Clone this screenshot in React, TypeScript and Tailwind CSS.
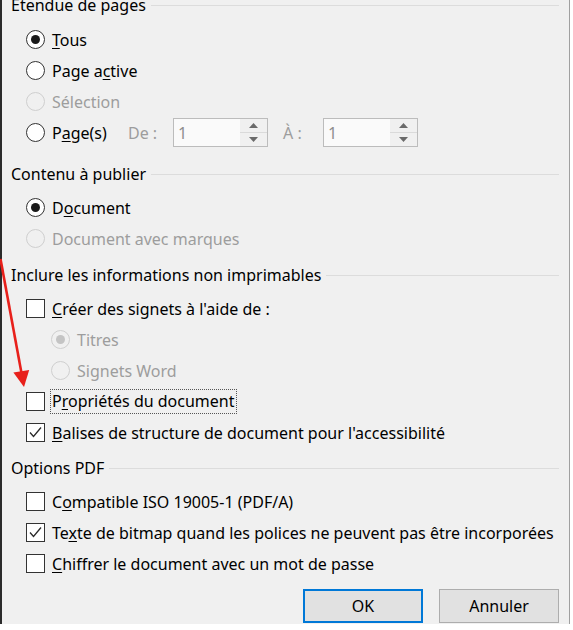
import type { ReactNode } from "react";

function Radio({ checked, disabled }: { checked?: boolean; disabled?: boolean }) {
  return (
    <span
      className={`flex h-[19px] w-[19px] shrink-0 items-center justify-center rounded-full border ${
        disabled ? "border-[#cfcfcf] bg-[#f0f0f0]" : "border-[#333] bg-white"
      }`}
    >
      {checked && (
        <span className={`h-[9px] w-[9px] rounded-full ${disabled ? "bg-[#c4c4c4]" : "bg-[#1a1a1a]"}`} />
      )}
    </span>
  );
}

function Check({ checked }: { checked?: boolean }) {
  return (
    <span className="flex h-[19px] w-[19px] shrink-0 items-center justify-center border border-[#333] bg-white">
      {checked && (
        <svg width="17" height="17" viewBox="0 0 17 17">
          <polyline points="3,8.5 6.5,12.5 14,3.5" fill="none" stroke="#2a2a2a" strokeWidth="1.3" />
        </svg>
      )}
    </span>
  );
}

function Row({ children, indent }: { children: ReactNode; indent?: boolean }) {
  return (
    <div className={`flex h-[31px] items-center gap-[7px] ${indent ? "pl-[49px]" : "pl-[24px]"}`}>{children}</div>
  );
}

function Header({ title, className = "" }: { title: string; className?: string }) {
  return (
    <div className={`flex h-[22px] items-center pl-[9px] pr-[10px] ${className}`}>
      <span className="whitespace-nowrap">{title}</span>
      <div className="ml-[5px] h-px flex-1 bg-[#dcdcdc]" />
    </div>
  );
}

function Spin() {
  return (
    <div className="flex h-[29px] w-[95px] shrink-0 border border-[#bcbcbc]">
      <div className="flex flex-1 items-center bg-[#fafafa] pl-[4px] text-[#8e8e8e]">1</div>
      <div className="flex w-[27px] flex-col bg-[#f0f0f0]">
        <div className="flex flex-1 items-center justify-center border-b border-[#dadada]">
          <svg width="9" height="5" viewBox="0 0 9 5">
            <polygon points="0,5 4.5,0 9,5" fill="#6a6a6a" />
          </svg>
        </div>
        <div className="flex flex-1 items-center justify-center">
          <svg width="9" height="5" viewBox="0 0 9 5">
            <polygon points="0,0 4.5,5 9,0" fill="#6a6a6a" />
          </svg>
        </div>
      </div>
    </div>
  );
}

const dim = "text-[#9d9d9d]";

export default function App() {
  return (
    <div className="h-[630px] w-[573px] overflow-hidden bg-white font-['Noto_Sans',sans-serif] text-[16px] text-black">
      <div className="relative h-[630px] w-[570px] border-l-2 border-r border-l-[#2b2b2b] border-r-[#a0a0a0] bg-[#f0f0f0]">
        <Header title="Étendue de pages" className="-mt-[6px]" />
        <div className="pt-[8px]">
          <Row>
            <Radio checked />
            <span>
              <u className="underline-offset-2">T</u>ous
            </span>
          </Row>
          <Row>
            <Radio />
            <span>
              Page a<u className="underline-offset-2">c</u>tive
            </span>
          </Row>
          <Row>
            <Radio disabled />
            <span className={dim}>Sélection</span>
          </Row>
          <Row>
            <Radio />
            <span className="w-[76px] shrink-0">
              P<u className="underline-offset-2">a</u>ge(s)
            </span>
            <span className={`-ml-[7px] w-[38px] shrink-0 ${dim}`}>De :</span>
            <Spin />
            <span className={`ml-[8px] w-[33px] shrink-0 ${dim}`}>À :</span>
            <Spin />
          </Row>
        </div>

        <Header title="Contenu à publier" className="mt-[15px]" />
        <div className="pt-[7px]">
          <Row>
            <Radio checked />
            <span>
              D<u className="underline-offset-2">o</u>cument
            </span>
          </Row>
          <Row>
            <Radio disabled />
            <span className={dim}>Document avec marques</span>
          </Row>
        </div>

        <Header title="Inclure les informations non imprimables" className="mt-[10px]" />
        <div className="pt-[7px]">
          <Row>
            <Check />
            <span>
              <u className="underline-offset-2">C</u>réer des signets à l'aide de :
            </span>
          </Row>
          <Row indent>
            <Radio checked disabled />
            <span className={dim}>Titres</span>
          </Row>
          <Row indent>
            <Radio disabled />
            <span className={dim}>Signets Word</span>
          </Row>
          <Row>
            <Check />
            <span className="-ml-[2px] border border-dotted border-[#555] px-[1px] leading-[23px]">
              P<u className="underline-offset-2">r</u>opriétés du document
            </span>
          </Row>
          <Row>
            <Check checked />
            <span>
              <u className="underline-offset-2">B</u>alises de structure de document pour l'accessibilité
            </span>
          </Row>
        </div>

        <Header title="Options PDF" className="mt-[9px]" />
        <div className="pt-[7px]">
          <Row>
            <Check />
            <span>
              C<u className="underline-offset-2">o</u>mpatible ISO 19005-1 (PDF/A)
            </span>
          </Row>
          <Row>
            <Check checked />
            <span className="whitespace-nowrap">
              Te<u className="underline-offset-2">x</u>te de bitmap quand les polices ne peuvent pas être incorporées
            </span>
          </Row>
          <Row>
            <Check />
            <span>
              <u className="underline-offset-2">C</u>hiffrer le document avec un mot de passe
            </span>
          </Row>
        </div>

        <div className="mt-[10px] flex justify-end gap-[16px] pr-[10px]">
          <button className="h-[34px] w-[120px] border-2 border-[#0078d7] bg-[#e1e1e1]">OK</button>
          <button className="h-[34px] w-[120px] border border-[#adadad] bg-[#e1e1e1]">Annuler</button>
        </div>

        <svg className="pointer-events-none absolute left-[-2px] top-0" width="60" height="420" viewBox="-2 0 60 420">
          <line x1="-1.5" y1="265" x2="19.3" y2="378" stroke="#e8201b" strokeWidth="2.6" />
          <polygon points="11.4,378.5 27.2,375.9 22,393" fill="#e8201b" />
        </svg>
      </div>
    </div>
  );
}
